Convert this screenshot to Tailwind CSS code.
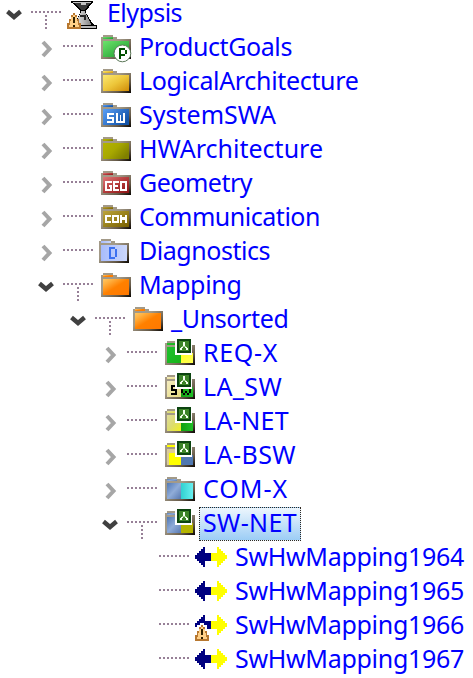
<!DOCTYPE html>
<html lang="en">
<head>
<meta charset="utf-8">
<title>Elypsis</title>
<script src="https://cdn.jsdelivr.net/npm/@tailwindcss/browser@4"></script>
</head>
<body class="bg-white overflow-hidden">
<svg class="absolute h-0 w-0" width="0" height="0">
  <defs>
    <linearGradient id="edge" x1="0" y1="0" x2="1" y2="1"><stop offset=".4" stop-color="#a39a88"/><stop offset=".75" stop-color="#665a48"/><stop offset="1" stop-color="#080400"/></linearGradient>
    <linearGradient id="green" x2="1" y2="1"><stop stop-color="#6ce36c"/><stop offset="1" stop-color="#1c9a2c"/></linearGradient>
    <linearGradient id="gold" x2="1" y2="1"><stop stop-color="#fbe870"/><stop offset=".5" stop-color="#edc63a"/><stop offset="1" stop-color="#d08c08"/></linearGradient>
    <linearGradient id="blue" x2="1" y2=".6"><stop stop-color="#5aa0f8"/><stop offset="1" stop-color="#1454a8"/></linearGradient>
    <linearGradient id="olive" x2="1" y2=".6"><stop stop-color="#b4b400"/><stop offset=".5" stop-color="#a8a800"/><stop offset="1" stop-color="#808000"/></linearGradient>
    <linearGradient id="red" x2="1" y2="1"><stop stop-color="#e07878"/><stop offset=".5" stop-color="#b43c3c"/><stop offset="1" stop-color="#8c1414"/></linearGradient>
    <linearGradient id="brown" x2="1" y2="1"><stop stop-color="#bca43c"/><stop offset="1" stop-color="#786000"/></linearGradient>
    <linearGradient id="sky" x2="1" y2="0"><stop stop-color="#a8bcfc"/><stop offset="1" stop-color="#ccd8fc"/></linearGradient>
    <linearGradient id="orange" x2="1" y2="1"><stop stop-color="#ffc864"/><stop offset=".2" stop-color="#ffb040"/><stop offset=".5" stop-color="#ff8000"/><stop offset="1" stop-color="#ff7800"/></linearGradient>
    <linearGradient id="lime" x2="1" y2="1"><stop stop-color="#20c030"/><stop offset="1" stop-color="#18b418"/></linearGradient>
    <linearGradient id="yellow" x2="1" y2="1"><stop stop-color="#ffff20"/><stop offset="1" stop-color="#ffff58"/></linearGradient>
    <linearGradient id="cream" x2="1" y2="1"><stop stop-color="#f4ecc0"/><stop offset="1" stop-color="#e8dc80"/></linearGradient>
    <linearGradient id="straw" x2="1" y2="1"><stop stop-color="#e0dc9c"/><stop offset=".5" stop-color="#dcdc70"/><stop offset="1" stop-color="#f0f020"/></linearGradient>
    <linearGradient id="leaf" x2="1" y2="0"><stop stop-color="#10a010"/><stop offset="1" stop-color="#20c028"/></linearGradient>
    <linearGradient id="steel" x2="1" y2="1"><stop stop-color="#5078b4"/><stop offset=".5" stop-color="#90acd8"/><stop offset="1" stop-color="#5878b0"/></linearGradient>
    <linearGradient id="cyan" x2="1" y2="0"><stop stop-color="#30d0d0"/><stop offset="1" stop-color="#68f0f0"/></linearGradient>
    <linearGradient id="metal" x2="1" y2="0"><stop stop-color="#e8e8e8"/><stop offset=".5" stop-color="#b8b8b8"/><stop offset="1" stop-color="#808080"/></linearGradient>
    <g id="frame">
      <path fill="url(#edge)" d="M1 0H6V1H8V2H15V12H0V1H1Z"/>
    </g>
    <g id="warn">
      <path fill="#b87830" d="M3 0H4V1H5V3H6V5H7V8H0V5H1V3H2V1H3Z"/>
      <path fill="#ffd088" d="M3 1H4V2H5V4H5.5V6H6V7H1V6H1.5V4H2V2H3Z"/>
      <path fill="#302000" d="M3 2H4V5H3ZM3 6H4V7H3Z"/>
    </g>
    <g id="badge">
      <path fill="#fff" d="M5 -1H13.5V7H5Z"/>
      <path fill="#0c4410" d="M6 -1H13V6H6Z"/>
      <path fill="#3c8428" d="M7 0H12V5H7Z"/>
      <path fill="#f4fff0" d="M9 .5H10V2.5H9ZM8 3H9V3.5H8.5V4.5H7.5V3.5H8ZM10 3H11V3.5H11.5V4.5H10.5V3.5H10Z"/>
      <path fill="#a8d098" d="M8.5 2.5H10.5V3H8.5Z"/>
    </g>
  </defs>
</svg>
<main id="tree" class="-mt-1 flex w-[473px] flex-col font-['Noto_Sans','Open_Sans',sans-serif] text-[25px] text-[#0000ff]"></main>
<script>
const folder = (fill, inner = '') =>
  `<use href="#frame"/><path fill="${fill}" d="M1 1H6V2H1Z"/><path fill="${fill}" d="M1 3H14V11H1Z"/>${inner}`;
const split = (a, b, inner = '', tab = a) =>
  `<use href="#frame"/><path fill="${tab}" d="M1 1H6V2H1Z"/><path fill="${a}" d="M1 3H8V11H1Z"/><path fill="${b}" d="M8 6H14V11H8Z"/>${inner}`;
const badge = '<use href="#badge"/>';
const arrows = '<path fill="#000080" d="M0 5V4H1V3H2V2H3V1H4V0H5V3H8V7H5V10H4V9H3V8H2V7H1V6H0Z"/><path fill="#ffff00" d="M16 5V4H15V3H14V2H13V1H12V0H11V3H8V7H11V10H12V9H13V8H14V7H15V6H16Z"/>';
const icons = {
  root: '<path fill="#000" d="M2 0H13V1H12.5L9.5 5V6L12 10L13.5 12H15V14H2V12H3.5L6.5 6V5L3 1H2Z"/><path fill="#383838" d="M4 1H11.5L9 4.5H7Z"/><path fill="#c4c4c4" d="M3 .4H12V1H3ZM7 1H9.5V2.2H7Z"/><path fill="url(#metal)" d="M7.2 5H8.8L12.3 12H4Z"/><path fill="#282828" d="M6.5 7H9.5V9.5H8.5V8H6.5Z"/><path fill="#b8b8b8" d="M3 12.4H14.4V13.3H3Z"/><use href="#warn" x="0" y="6"/>',
  goals: folder('url(#green)', '<circle cx="10.7" cy="9.2" r="4.2" fill="#fff" stroke="#5c7858" stroke-width=".5" shape-rendering="auto"/><path fill="#005000" fill-rule="evenodd" d="M9 6.5H12V7.5H13V9.5H12V10.5H10V12H9ZM10 7.5V9.5H12V7.5Z"/>'),
  logical: folder('url(#gold)'),
  sw: folder('url(#blue)', '<path fill="#fff" d="M3 5H6.5V6H4V7H6.5V10H3V9H5.5V8H3ZM7.5 5H8.5V9H9.5V6H10V9H11V5H12V10H7.5Z"/>'),
  hw: folder('url(#olive)'),
  geo: folder('url(#red)', '<path fill="#fff" d="M2 5H5.5V6H3V9H4.5V8H4V7H5.5V10H2ZM6 5H9V6H7V7H8.5V8H7V9H9V10H6ZM9.5 5H13V10H9.5ZM10.5 6V9H12V6Z" fill-rule="evenodd"/>'),
  com: folder('url(#brown)', '<path fill="#fff" d="M2 5H5V6H3V8H5V9H2ZM5.5 5H9V9H5.5ZM6.5 6V8H8V6ZM9.5 5H10.5V6H12V5H13V9H12V7.5H10.5V9H9.5Z" fill-rule="evenodd"/>'),
  diag: folder('url(#sky)', '<path fill="#3c70f0" fill-rule="evenodd" d="M5 4H8V5H9V9H8V10H5ZM6 5V9H8V5Z"/>'),
  orange: folder('url(#orange)'),
  req: split('url(#lime)', 'url(#yellow)', badge),
  lasw: split('url(#cream)', 'url(#leaf)', '<path fill="#000" d="M3 5H6V6H4V7H6V10H3V9H5V8H3ZM8 7H9V9H10V8H11V9H12V7H13V9H12V10H11V9H10V10H9V9H8Z"/>' + badge),
  lanet: split('url(#straw)', 'url(#leaf)', badge),
  labsw: split('#ffff00', '#5078b0', '<path fill="#dccc98" d="M1 3H5V5H1ZM1 5H2V11H1Z"/>' + badge),
  comx: split('url(#steel)', 'url(#cyan)', '<path fill="url(#cyan)" d="M8 3H14V11H8Z"/>'),
  swnet: split('url(#steel)', '#b4b400', badge),
  map: arrows,
  mapwarn: arrows + '<path fill="#fff" d="M0 7H1V5H2.5V4H4.5V5H6V10H0Z"/><use href="#warn" y="5"/>'
};
// depth, state, icon, label, label width
const rows = [
  [0, 'open', 'root', 'Elypsis', 75],
  [1, 'closed', 'goals', 'ProductGoals', 153],
  [1, 'closed', 'logical', 'LogicalArchitecture', 219.5],
  [1, 'closed', 'sw', 'SystemSWA', 137],
  [1, 'closed', 'hw', 'HWArchitecture', 184],
  [1, 'closed', 'geo', 'Geometry', 113],
  [1, 'closed', 'com', 'Communication', 181],
  [1, 'closed', 'diag', 'Diagnostics', 131],
  [1, 'open', 'orange', 'Mapping', 102.5],
  [2, 'open', 'orange', '_Unsorted', 117.5],
  [3, 'closed', 'req', 'REQ-X', 75],
  [3, 'closed', 'lasw', 'LA_SW', 79],
  [3, 'closed', 'lanet', 'LA-NET', 86],
  [3, 'closed', 'labsw', 'LA-BSW', 93],
  [3, 'closed', 'comx', 'COM-X', 85],
  [3, 'open', 'swnet', 'SW-NET', 94],
  [4, 'leaf', 'map', 'SwHwMapping1964', 229],
  [4, 'leaf', 'map', 'SwHwMapping1965', 229],
  [4, 'leaf', 'mapwarn', 'SwHwMapping1966', 229],
  [4, 'leaf', 'map', 'SwHwMapping1967', 229]
];
const chevrons = {
  open: '<path d="M7.5 15.5L14 21L20.5 15.5" fill="none" stroke="#404040" stroke-width="4.4"/>',
  closed: '<path d="M11 12L17.5 19L11 26" fill="none" stroke="#a6a6a6" stroke-width="4"/>',
  leaf: ''
};
const ctx = document.createElement('canvas').getContext('2d');
ctx.font = '25px "Noto Sans"';
const tracking = (label, width) => (width - ctx.measureText(label).width) / label.length;
document.getElementById('tree').innerHTML = rows.map(([depth, state, icon, label, width]) => {
  const box = depth === 4 ? '0 -3.5 16 17' : depth === 0 || icon === 'diag' ? '0 -2.5 16 17' : '-1 -2.5 16 17';
  const text = icon === 'swnet'
    ? 'ml-1 mt-px h-[34px] w-[102px] border border-dotted border-[#302820] bg-linear-to-b from-[#edf6fd] to-[#9ccdf5] pl-[3px] leading-[28px]'
    : 'pl-2 leading-[32px]';
  return `<div class="flex h-[34px] shrink-0 items-stretch">
    <div class="shrink-0" style="width:${depth * 32}px"></div>
    <svg class="h-[34px] w-[31px] shrink-0" viewBox="0 0 31 34">${chevrons[state]}</svg>
    <svg class="h-[34px] w-[36px] shrink-0" viewBox="0 0 36 34" shape-rendering="crispEdges" fill="none" stroke="#978097" stroke-width="2"><path stroke-dasharray="2 2" d="M0 16H30"/>${state === 'open' ? '<path stroke-dasharray="2 2" d="M15 17V33" stroke-dashoffset="2"/>' : ''}</svg>
    <svg class="h-[34px] w-[32px] shrink-0 overflow-visible" viewBox="${box}" shape-rendering="crispEdges">${icons[icon]}</svg>
    <div class="${text} shrink-0 whitespace-nowrap" style="letter-spacing:${tracking(label, width).toFixed(3)}px">${label}</div>
  </div>`;
}).join('');
</script>
</body>
</html>
